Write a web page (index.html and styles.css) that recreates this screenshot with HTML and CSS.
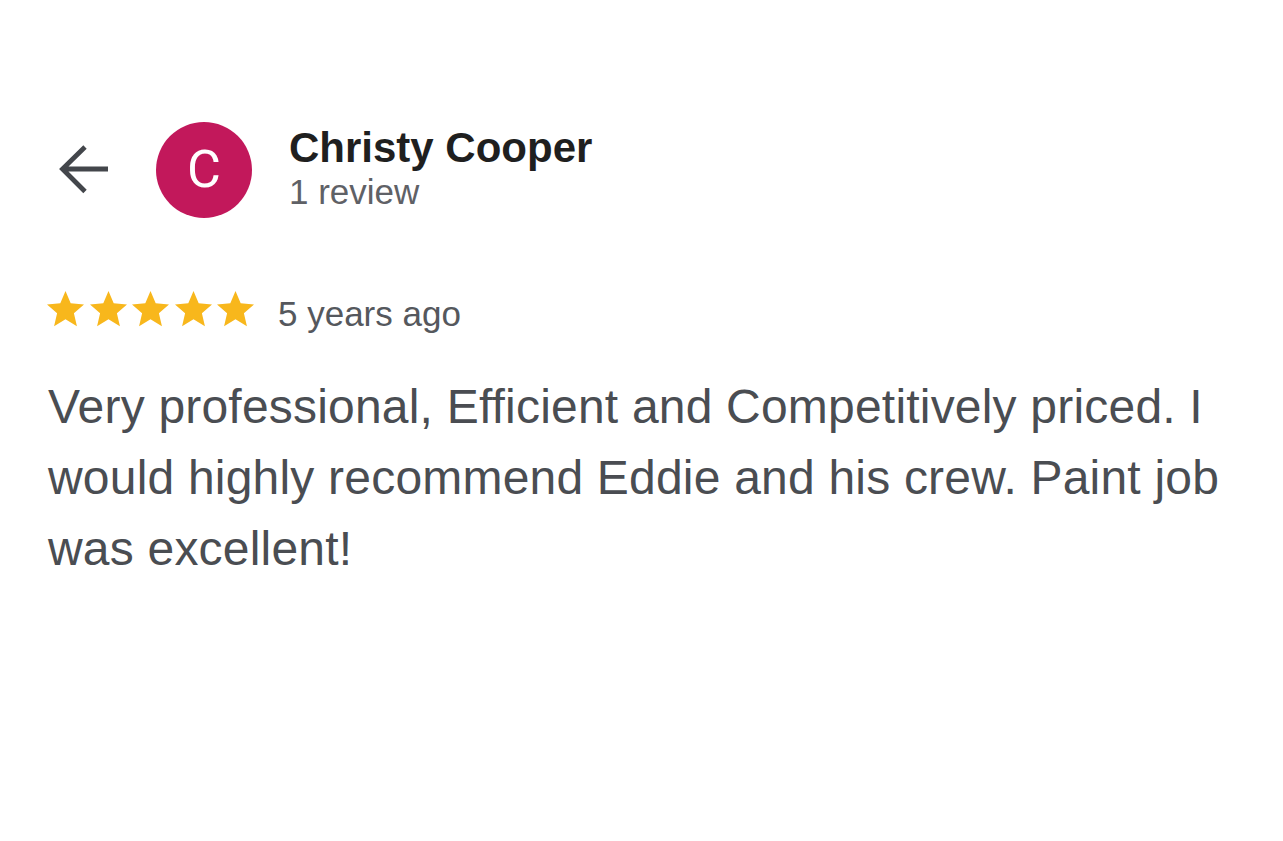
FILE: index.html
```html
<!DOCTYPE html>
<html lang="en">
<head>
<meta charset="utf-8">
<title>Christy Cooper review</title>
<link rel="stylesheet" href="styles.css">
</head>
<body>
<div class="page">
  <div class="header">
    <svg class="back" width="52" height="52" viewBox="0 0 52 52" aria-label="Back">
      <path d="M4 26 H50 M27 4 L4.5 26 L27 48.5" fill="none" stroke="#43464b" stroke-width="4.8" stroke-linejoin="miter"/>
    </svg>
    <div class="avatar">C</div>
    <div class="who">
      <div class="name">Christy Cooper</div>
      <div class="count">1 review</div>
    </div>
  </div>
  <div class="meta">
    <div class="stars">
      <svg class="star" width="37" height="37" viewBox="2 2 20 20"><path d="M12 17.27L18.18 21l-1.64-7.03L22 9.24l-7.19-.61L12 2 9.19 8.63 2 9.24l5.46 4.73L5.82 21z"/></svg>
      <svg class="star" width="37" height="37" viewBox="2 2 20 20"><path d="M12 17.27L18.18 21l-1.64-7.03L22 9.24l-7.19-.61L12 2 9.19 8.63 2 9.24l5.46 4.73L5.82 21z"/></svg>
      <svg class="star" width="37" height="37" viewBox="2 2 20 20"><path d="M12 17.27L18.18 21l-1.64-7.03L22 9.24l-7.19-.61L12 2 9.19 8.63 2 9.24l5.46 4.73L5.82 21z"/></svg>
      <svg class="star" width="37" height="37" viewBox="2 2 20 20"><path d="M12 17.27L18.18 21l-1.64-7.03L22 9.24l-7.19-.61L12 2 9.19 8.63 2 9.24l5.46 4.73L5.82 21z"/></svg>
      <svg class="star" width="37" height="37" viewBox="2 2 20 20"><path d="M12 17.27L18.18 21l-1.64-7.03L22 9.24l-7.19-.61L12 2 9.19 8.63 2 9.24l5.46 4.73L5.82 21z"/></svg>
    </div>
    <div class="ago">5 years ago</div>
  </div>
  <p class="text">Very professional, Efficient and Competitively priced. I would highly recommend Eddie and his crew. Paint job was excellent!</p>
</div>
</body>
</html>
```
FILE: styles.css
```css
html, body {
  margin: 0;
  padding: 0;
  background: #ffffff;
}
body {
  font-family: "Liberation Sans", Arial, sans-serif;
  width: 1283px;
  height: 841px;
  overflow: hidden;
}
.page {
  padding: 122px 40px 0 48px;
}
.header {
  display: flex;
  align-items: flex-start;
}
.back {
  margin-left: 10px;
  margin-top: 21px;
  flex: none;
}
.avatar {
  flex: none;
  width: 96px;
  height: 96px;
  border-radius: 50%;
  background: #c2185b;
  color: #ffffff;
  font-family: Roboto, "Liberation Sans", sans-serif;
  font-size: 52px;
  line-height: 96px;
  text-align: center;
  margin-left: 46px;
}
.who {
  margin-left: 37px;
  padding-top: 3px;
}
.name {
  font-size: 42px;
  font-weight: bold;
  line-height: 46px;
  color: #1f1f1f;
}
.count {
  font-size: 35px;
  line-height: 40px;
  color: #5f6166;
  margin-top: 1px;
}
.meta {
  display: flex;
  align-items: flex-start;
  margin-top: 73px;
}
.stars {
  display: flex;
  gap: 5.5px;
  margin-left: -1px;
}
.star {
  fill: #f8b71c;
  display: block;
}
.ago {
  margin-left: 24px;
  font-size: 35px;
  line-height: 36px;
  padding-top: 5px;
  color: #55585d;
}
.text {
  margin: 39px 0 0 0;
  font-size: 48px;
  line-height: 71px;
  letter-spacing: 0.2px;
  color: #4a4d52;
}
```
